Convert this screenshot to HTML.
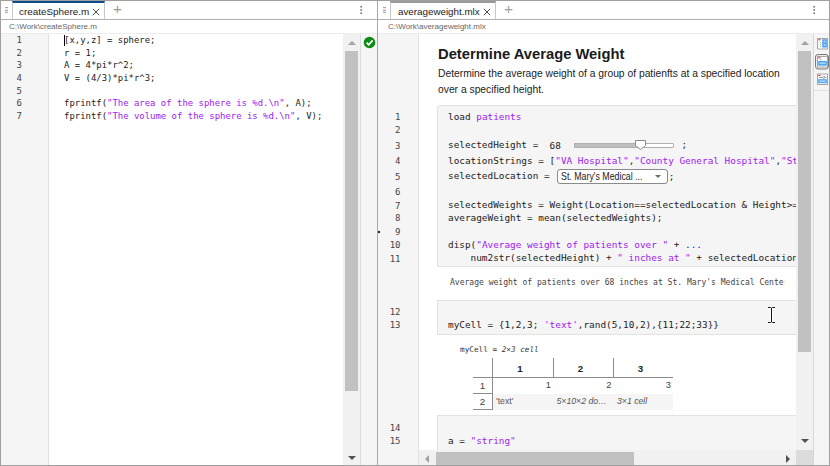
<!DOCTYPE html>
<html><head><meta charset="utf-8"><title>Editor</title>
<style>
*{box-sizing:border-box;margin:0;padding:0}
html,body{width:830px;height:466px;overflow:hidden;background:#fff}
body{position:relative;font-family:"Liberation Sans",sans-serif;font-size:11px;color:#222}
.abs{position:absolute}
.mono{font-family:"DejaVu Sans Mono","Liberation Mono",monospace;white-space:pre}
.s{color:#a020f0}
.ln{position:absolute;text-align:right;color:#444;font-size:9px;line-height:12.63px}
.code{position:absolute;font-size:8.95px;line-height:12.63px;color:#222}

.rcode{font-size:9.395px;line-height:13px;color:#222}
.rln{left:378px;width:22.5px;text-align:right;color:#444;font-size:9px;line-height:13px}
.th{font-size:9.7px;line-height:13px;font-weight:bold;text-align:center;color:#222}
.td{font-size:9.3px;line-height:13px;color:#444;white-space:nowrap}
</style></head><body>
<!-- outer frame -->
<div class="abs" style="left:0;top:0;width:830px;height:1px;background:#a0a0a0"></div>
<div class="abs" style="left:0;top:0;width:1px;height:466px;background:#a0a0a0"></div>
<div class="abs" style="left:829px;top:0;width:1px;height:466px;background:#a0a0a0"></div>
<div class="abs" style="left:0;top:465px;width:830px;height:1px;background:#a0a0a0"></div>

<!-- LEFT PANE -->
<div class="abs" style="left:1px;top:19px;width:376px;height:1px;background:#b0b0b0"></div>
<div class="abs" style="left:1px;top:33px;width:376px;height:1px;background:#ececec"></div>
<!-- active tab -->
<div class="abs" style="left:12px;top:1px;width:93px;height:18px;border-left:1px solid #c8c8c8;border-right:1px solid #c8c8c8;border-top:2px solid #0f4c8a;background:#fff"></div>
<div class="abs" style="left:19px;top:5px;font-size:9.9px;line-height:13px;color:#222">createSphere.m</div>
<svg class="abs" style="left:92px;top:8px" width="8" height="8" viewBox="0 0 8 8"><path d="M0.8 0.8 L7.2 7.2 M7.2 0.8 L0.8 7.2" stroke="#4a4a4a" stroke-width="1" fill="none"/></svg>
<div class="abs" style="left:113px;top:1px;font-size:15px;line-height:16px;color:#999">+</div>
<div class="abs" style="left:4.5px;top:7px;width:3.5px;height:6px;background:linear-gradient(#a8a8a8 0 1px,#eee 1px 3px,#a8a8a8 3px 4px,#eee 4px 5px,#a8a8a8 5px 6px)"></div>
<svg class="abs" style="left:359px;top:5px" width="4" height="10" viewBox="0 0 4 10"><rect x="1.4" y="1.1" width="1.5" height="1.4" fill="#555"/><rect x="1.4" y="4.3" width="1.5" height="1.4" fill="#555"/><rect x="1.4" y="7.5" width="1.5" height="1.4" fill="#555"/></svg>
<div class="abs" style="left:9px;top:20.5px;font-size:8px;line-height:11px;color:#666">C:\Work\createSphere.m</div>
<!-- gutter -->
<div class="abs" style="left:1px;top:34px;width:48px;height:431px;background:#f5f5f5;border-right:1px solid #e0e0e0"></div>
<div class="ln mono" style="left:1px;top:34px;width:21px">1
2
3
4
5
6
7</div>
<div class="code mono" style="left:64px;top:34px">[x,y,z] = sphere;
r = 1;
A = 4*pi*r^2;
V = (4/3)*pi*r^3;

fprintf(<span class="s">"The area of the sphere is %d.\n"</span>, A);
fprintf(<span class="s">"The volume of the sphere is %d.\n"</span>, V);</div>
<div class="abs" style="left:64px;top:35px;width:1px;height:11px;background:#000"></div>
<!-- left scrollbar -->
<div class="abs" style="left:343px;top:34px;width:17px;height:431px;background:#f1f1f1"></div>
<div class="abs" style="left:345px;top:51px;width:13px;height:340px;background:#c1c1c1"></div>
<div class="abs" style="left:347.5px;top:41px;width:0;height:0;border-left:4px solid transparent;border-right:4px solid transparent;border-bottom:4px solid #a3a3a3"></div>
<div class="abs" style="left:347.5px;top:456px;width:0;height:0;border-left:4px solid transparent;border-right:4px solid transparent;border-top:4px solid #505050"></div>
<div class="abs" style="left:360px;top:34px;width:17px;height:431px;background:#f5f5f5;border-left:1px solid #ddd"></div>
<svg class="abs" style="left:363px;top:36px" width="13" height="13" viewBox="0 0 13 13"><circle cx="6.5" cy="6.5" r="5.8" fill="#0e8a16"/><path d="M3.6 6.6 L5.7 8.7 L9.6 4.4" fill="none" stroke="#fff" stroke-width="1.7"/></svg>
<div class="abs" style="left:377px;top:1px;width:1px;height:464px;background:#a8a8a8"></div>

<!-- RIGHT PANE -->
<div class="abs" style="left:378px;top:19px;width:451px;height:1px;background:#b0b0b0"></div>
<div class="abs" style="left:378px;top:33px;width:451px;height:1px;background:#ececec"></div>
<div class="abs" style="left:390px;top:1px;width:106px;height:18px;border-left:1px solid #c8c8c8;border-right:1px solid #c8c8c8;border-top:2px solid #999;background:#fff"></div>
<div class="abs" style="left:398px;top:5px;font-size:9.8px;line-height:13px;color:#222">averageweight.mlx</div>
<svg class="abs" style="left:483px;top:8px" width="8" height="8" viewBox="0 0 8 8"><path d="M0.8 0.8 L7.2 7.2 M7.2 0.8 L0.8 7.2" stroke="#4a4a4a" stroke-width="1" fill="none"/></svg>
<div class="abs" style="left:504px;top:1px;font-size:15.5px;line-height:16px;color:#a0a0a0">+</div>
<div class="abs" style="left:382.5px;top:7px;width:3.5px;height:6px;background:linear-gradient(#a8a8a8 0 1px,#eee 1px 3px,#a8a8a8 3px 4px,#eee 4px 5px,#a8a8a8 5px 6px)"></div>
<svg class="abs" style="left:812px;top:5px" width="4" height="10" viewBox="0 0 4 10"><rect x="1.4" y="1.1" width="1.5" height="1.4" fill="#555"/><rect x="1.4" y="4.3" width="1.5" height="1.4" fill="#555"/><rect x="1.4" y="7.5" width="1.5" height="1.4" fill="#555"/></svg>
<div class="abs" style="left:388px;top:20.5px;font-size:8px;line-height:11px;color:#666">C:\Work\averageweight.mlx</div>
<!-- right gutter -->
<div class="abs" style="left:378px;top:34px;width:41px;height:431px;background:#f5f5f5;border-right:1px solid #e2e2e2"></div>

<!-- right content -->
<div class="abs" id="rc" style="left:419px;top:34px;width:377px;height:416px;overflow:hidden;background:#fff">
<div class="abs" style="left:19px;top:11px;font-size:14.75px;line-height:18px;font-weight:bold;color:#1a1a1a;white-space:nowrap">Determine Average Weight</div>
<div class="abs" style="left:19px;top:32.4px;font-size:10.3px;line-height:16px;color:#222;white-space:nowrap">Determine the average weight of a group of patienfts at a specified location<br>over a specified height.</div>
<!-- code block 1 -->
<div class="abs" style="left:18px;top:71px;width:370px;height:162px;background:#f5f5f5;border:1px solid #e2e2e2;border-radius:3px 0 0 0"></div>
<div class="abs rcode mono" style="left:29px;top:76px">load <span class="s">patients</span></div>
<div class="abs rcode mono" style="left:29px;top:104.4px">selectedHeight =</div>
<div class="abs rcode mono" style="left:130.5px;top:104.6px">68</div>
<div class="abs rcode mono" style="left:262.5px;top:104px">;</div>
<div class="abs" style="left:155px;top:109px;width:100px;height:5px;border:1px solid #b0b0b0;background:#fff;border-radius:1px"></div>
<div class="abs" style="left:155px;top:109px;width:64px;height:5px;background:#c0c0c0;border:1px solid #b0b0b0"></div>
<svg class="abs" style="left:216px;top:106px" width="11" height="11" viewBox="0 0 11 11"><path d="M0.5 0.5 H10.5 V5.5 L5.5 9.5 L0.5 5.5 Z" fill="#fff" stroke="#8a8a8a" stroke-width="1"/></svg>
<div class="abs rcode mono" style="left:29px;top:120px">locationStrings = [<span class="s">"VA Hospital"</span>,<span class="s">"County General Hospital"</span>,<span class="s">"St. Mary's Medical Center"</span>];</div>
<div class="abs rcode mono" style="left:29px;top:135.4px">selectedLocation =</div>
<div class="abs" style="left:138px;top:135px;width:110.5px;height:15px;border:1px solid #8a8a8a;border-radius:3px;background:#fff"></div>
<div class="abs" style="left:142px;top:136.5px;font-size:10.1px;line-height:12px;color:#222;white-space:nowrap;transform:scaleX(0.873);transform-origin:0 0">St. Mary's Medical ...</div>
<div class="abs" style="left:235.5px;top:140.5px;width:0;height:0;border-left:3.5px solid transparent;border-right:3.5px solid transparent;border-top:3.5px solid #6a6a6a"></div>
<div class="abs rcode mono" style="left:249.7px;top:136px">;</div>
<div class="abs rcode mono" style="left:29px;top:163.7px">selectedWeights = Weight(Location==selectedLocation &amp; Height&gt;=selectedHeight);</div>
<div class="abs rcode mono" style="left:29px;top:177px">averageWeight = mean(selectedWeights);</div>
<div class="abs rcode mono" style="left:29px;top:204px">disp(<span class="s">"Average weight of patients over "</span> + <span style="color:#1414ff">...</span></div>
<div class="abs rcode mono" style="left:29px;top:217px">    num2str(selectedHeight) + <span class="s">" inches at "</span> + selectedLocation)</div>
<!-- output 1 -->
<div class="abs mono" style="left:31px;top:243px;width:334.5px;overflow:hidden;font-size:8.04px;line-height:11px;color:#444">Average weight of patients over 68 inches at St. Mary's Medical Center</div>
<!-- code block 2 -->
<div class="abs" style="left:18px;top:266px;width:370px;height:35px;background:#f5f5f5;border:1px solid #e2e2e2"></div>
<div class="abs rcode mono" style="left:29px;top:283.5px">myCell = {1,2,3; <span class="s">'text'</span>,rand(5,10,2),{11;22;33}}</div>
<!-- output 2 -->
<div class="abs mono" style="left:41px;top:310px;font-size:7.7px;line-height:11px;color:#333">myCell = <i>2×3 cell</i></div>
<div class="abs" style="left:73px;top:324px;width:1px;height:52px;background:#8c8c8c"></div>
<div class="abs" style="left:134px;top:324px;width:1px;height:20px;background:#8c8c8c"></div>
<div class="abs" style="left:194px;top:324px;width:1px;height:20px;background:#8c8c8c"></div>
<div class="abs" style="left:54px;top:343px;width:200px;height:1px;background:#8c8c8c"></div>
<div class="abs" style="left:54px;top:359px;width:19px;height:1px;background:#8c8c8c"></div>
<div class="abs" style="left:54px;top:375px;width:19px;height:1px;background:#8c8c8c"></div>
<div class="abs" style="left:74px;top:360px;width:180px;height:16px;background:#f5f5f5"></div>
<div class="abs th" style="left:71px;top:327.5px;width:60px">1</div>
<div class="abs th" style="left:132px;top:327.5px;width:59px">2</div>
<div class="abs th" style="left:192px;top:327.5px;width:59px">3</div>
<div class="abs td" style="left:54px;top:344.6px;width:19px;text-align:center;font-size:9.8px">1</div>
<div class="abs td" style="left:54px;top:360.6px;width:19px;text-align:center;font-size:9.8px">2</div>
<div class="abs td" style="left:74px;top:345px;width:58px;text-align:right">1</div>
<div class="abs td" style="left:135px;top:345px;width:57.5px;text-align:right">2</div>
<div class="abs td" style="left:195px;top:345px;width:57px;text-align:right">3</div>
<div class="abs td" style="left:77px;top:361px;font-size:8.7px;color:#555">'text'</div>
<div class="abs td" style="left:137.5px;top:361px;font-style:italic;font-size:8.7px;color:#555">5×10×2 do…</div>
<div class="abs td" style="left:198px;top:361px;font-style:italic;font-size:8.7px;color:#555">3×1 cell</div>
<!-- code block 3 -->
<div class="abs" style="left:18px;top:381px;width:370px;height:60px;background:#f5f5f5;border:1px solid #e2e2e2"></div>
<div class="abs rcode mono" style="left:29px;top:400px">a = <span class="s">"string"</span></div>
</div>
<!-- right line numbers -->
<div class="abs rln mono" style="top:111px">1</div>
<div class="abs rln mono" style="top:124px">2</div>
<div class="abs rln mono" style="top:140px">3</div>
<div class="abs rln mono" style="top:155px">4</div>
<div class="abs rln mono" style="top:171px">5</div>
<div class="abs rln mono" style="top:185.5px">6</div>
<div class="abs rln mono" style="top:199.5px">7</div>
<div class="abs rln mono" style="top:212px">8</div>
<div class="abs rln mono" style="top:226px">9</div>
<div class="abs rln mono" style="top:239px">10</div>
<div class="abs rln mono" style="top:253px">11</div>
<div class="abs rln mono" style="top:305.5px">12</div>
<div class="abs rln mono" style="top:318.5px">13</div>
<div class="abs rln mono" style="top:422px">14</div>
<div class="abs rln mono" style="top:435px">15</div>
<div class="abs" style="left:378px;top:231px;width:2px;height:2px;background:#222"></div>
<!-- I-beam cursor -->
<svg class="abs" style="left:766px;top:307px" width="12" height="17" viewBox="0 0 12 17"><path d="M2 0.5 H9 M5.5 1 V15 M2 15.5 H9" fill="none" stroke="#fff" stroke-width="3" stroke-opacity="0.9"/><path d="M2 0.5 H4.6 L5.5 1.2 L6.4 0.5 H9 M5.5 1 V15 M2 15.5 H4.6 L5.5 14.8 L6.4 15.5 H9" fill="none" stroke="#111" stroke-width="1"/></svg>
<!-- right side strip -->
<div class="abs" style="left:813px;top:34px;width:16px;height:431px;background:#f5f5f5;border-left:1px solid #d8d8d8"></div>

<!-- side icons -->
<svg class="abs" style="left:814px;top:34px" width="15" height="60" viewBox="0 0 15 60">
<!-- icon 1 -->
<rect x="3.5" y="4.5" width="10" height="10.5" fill="#fff" stroke="#a6a6a6" stroke-width="1"/>
<rect x="8.2" y="5.2" width="4.6" height="8.3" fill="#4aa3ee"/>
<rect x="9.6" y="6.6" width="2" height="2" fill="#a9d3f7"/>
<rect x="9.6" y="10" width="2" height="2" fill="#a9d3f7"/>
<rect x="4.3" y="5.2" width="2.2" height="1.1" fill="#d9363e"/>
<path d="M6 8 l1 0.7 M6 10 l1 0.7 M6 12 l1 0.7" stroke="#888" stroke-width="0.8"/>
<!-- icon 2 selected -->
<rect x="1.5" y="20.5" width="13" height="14.5" rx="2.5" fill="#ededed" stroke="#7a7a7a" stroke-width="1"/>
<rect x="3.5" y="22.5" width="10" height="10.5" fill="#fff" stroke="#a6a6a6" stroke-width="1"/>
<rect x="4.2" y="27" width="8.6" height="4.6" fill="#4aa3ee"/>
<rect x="5.5" y="28.3" width="6" height="1.8" fill="#a9d3f7"/>
<rect x="4.3" y="23.2" width="2.2" height="1.1" fill="#d9363e"/>
<path d="M6.2 25 L7.4 26.3" stroke="#888" stroke-width="0.8"/>
<!-- icon 3 -->
<rect x="3.5" y="40" width="10" height="10.5" fill="#fff" stroke="#a6a6a6" stroke-width="1"/>
<rect x="4.2" y="45.2" width="8.6" height="4" fill="#4aa3ee"/>
<rect x="5.5" y="46.3" width="6" height="1.8" fill="#a9d3f7"/>
<rect x="4.3" y="40.8" width="2.2" height="1.1" fill="#d9363e"/>
<path d="M5 43.4 H12.5" stroke="#777" stroke-width="0.8"/>
<path d="M9.8 42 L11.2 43.4 L9.8 44.8 L8.4 43.4 Z" fill="#eee" stroke="#666" stroke-width="0.6"/>
<path d="M0 56.5 H15" stroke="#e0e0e0" stroke-width="1"/>
</svg>
<!-- right v scrollbar -->
<div class="abs" style="left:796px;top:34px;width:17px;height:416px;background:#f1f1f1"></div>
<div class="abs" style="left:798px;top:51px;width:13px;height:301px;background:#c1c1c1"></div>
<div class="abs" style="left:800.5px;top:41px;width:0;height:0;border-left:4px solid transparent;border-right:4px solid transparent;border-bottom:4px solid #a3a3a3"></div>
<div class="abs" style="left:800.5px;top:439.3px;width:0;height:0;border-left:4px solid transparent;border-right:4px solid transparent;border-top:4px solid #505050"></div>
<!-- h scrollbar -->
<div class="abs" style="left:419px;top:450px;width:377px;height:15px;background:#f1f1f1"></div>
<div class="abs" style="left:796px;top:450px;width:17px;height:15px;background:#dcdcdc"></div>
<div class="abs" style="left:436px;top:452px;width:198px;height:13px;background:#c1c1c1"></div>
<div class="abs" style="left:425px;top:454.5px;width:0;height:0;border-top:4px solid transparent;border-bottom:4px solid transparent;border-right:4.5px solid #a3a3a3"></div>
<div class="abs" style="left:786px;top:454.5px;width:0;height:0;border-top:4px solid transparent;border-bottom:4px solid transparent;border-left:4.5px solid #505050"></div>
</body></html>
